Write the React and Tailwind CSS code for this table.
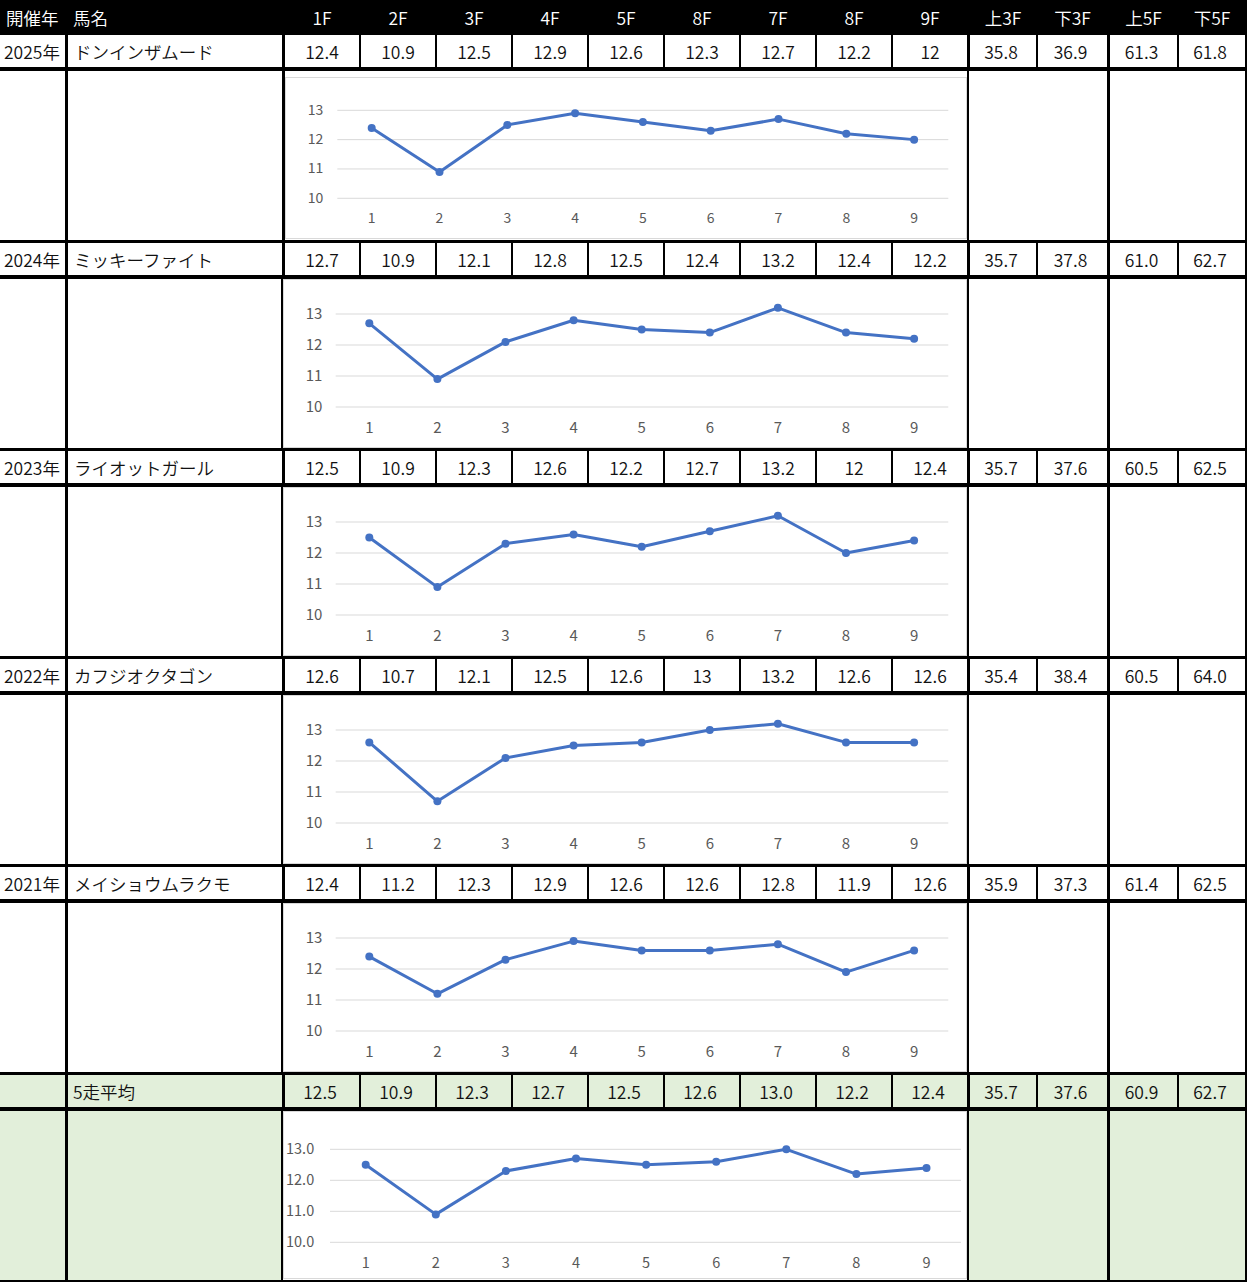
import React from "react";

const HEAD = ["1F", "2F", "3F", "4F", "5F", "8F", "7F", "8F", "9F"];
const TAILHEAD = ["上3F", "下3F", "上5F", "下5F"];

const ROWS = [
  { year: "2025年", name: "ドンインザムード", laps: ["12.4", "10.9", "12.5", "12.9", "12.6", "12.3", "12.7", "12.2", "12"], tail: ["35.8", "36.9", "61.3", "61.8"] },
  { year: "2024年", name: "ミッキーファイト", laps: ["12.7", "10.9", "12.1", "12.8", "12.5", "12.4", "13.2", "12.4", "12.2"], tail: ["35.7", "37.8", "61.0", "62.7"] },
  { year: "2023年", name: "ライオットガール", laps: ["12.5", "10.9", "12.3", "12.6", "12.2", "12.7", "13.2", "12", "12.4"], tail: ["35.7", "37.6", "60.5", "62.5"] },
  { year: "2022年", name: "カフジオクタゴン", laps: ["12.6", "10.7", "12.1", "12.5", "12.6", "13", "13.2", "12.6", "12.6"], tail: ["35.4", "38.4", "60.5", "64.0"] },
  { year: "2021年", name: "メイショウムラクモ", laps: ["12.4", "11.2", "12.3", "12.9", "12.6", "12.6", "12.8", "11.9", "12.6"], tail: ["35.9", "37.3", "61.4", "62.5"] },
];
const AVG = { year: "", name: "5走平均", laps: ["12.5", "10.9", "12.3", "12.7", "12.5", "12.6", "13.0", "12.2", "12.4"], tail: ["35.7", "37.6", "60.9", "62.7"] };

const LAP_W = ["w-[76px]", "w-[76px]", "w-[76px]", "w-[76px]", "w-[76px]", "w-[76px]", "w-[76px]", "w-[76px]", "w-[77px]"];
const LAP_B = ["border-r-2", "border-r-2", "border-r-2", "border-r-2", "border-r-2", "border-r-2", "border-r-2", "border-r-2", "border-r-[3px]"];
const TAIL_W = ["w-[68px] border-r-2", "w-[72px] border-r-[3px]", "w-[69px] border-r-2", "w-[68px] border-r-2"];

const LAYOUTS = {
  first: { w: 682, h: 162, g13: 33.3, unit: 29.33, gx1: 52.3, gx2: 663.3, px0: 86.7, pdx: 67.8, ylx: 30.5, ylAnchor: "middle", xly: 139.7, fs: 14, fmt: (v) => String(v) },
  normal: { w: 684, h: 169, g13: 35, unit: 31, gx1: 52.7, gx2: 665.3, px0: 86.3, pdx: 68.1, ylx: 31, ylAnchor: "middle", xly: 147, fs: 15, fmt: (v) => String(v) },
  avg: { w: 684, h: 168, g13: 38.3, unit: 31, gx1: 47, gx2: 678, px0: 82.7, pdx: 70.1, ylx: 3, ylAnchor: "start", xly: 150.7, fs: 14.5, fmt: (v) => v.toFixed(1) },
};

const FONT = "'Noto Sans CJK JP', 'Noto Sans', sans-serif";

function Chart({ values, kind }) {
  const L = LAYOUTS[kind];
  const yOf = (v) => L.g13 + (13 - v) * L.unit;
  const pts = values.map((v, i) => [L.px0 + i * L.pdx, yOf(parseFloat(v))]);
  return (
    <div className="bg-white border border-[#d9d9d9]" style={{ width: L.w, height: L.h }}>
      <svg width={L.w - 2} height={L.h - 2} viewBox={`1 1 ${L.w - 2} ${L.h - 2}`} className="block">
        {[13, 12, 11, 10].map((t) => (
          <g key={t}>
            <line x1={L.gx1} x2={L.gx2} y1={yOf(t)} y2={yOf(t)} stroke="#d9d9d9" strokeWidth="1" />
            <text
              x={L.ylx}
              y={yOf(t) - 1.5}
              textAnchor={L.ylAnchor}
              dominantBaseline="central"
              fontSize={L.fs}
              fontWeight="400"
              fill="#595959"
              fontFamily={FONT}
            >
              {L.fmt(t)}
            </text>
          </g>
        ))}
        {pts.map(([x], i) => (
          <text
            key={i}
            x={x}
            y={L.xly}
            textAnchor="middle"
            dominantBaseline="central"
            fontSize={L.fs}
            fontWeight="400"
            fill="#595959"
            fontFamily={FONT}
          >
            {i + 1}
          </text>
        ))}
        <polyline
          points={pts.map((p) => p.join(",")).join(" ")}
          fill="none"
          stroke="#4472C4"
          strokeWidth="3"
          strokeLinejoin="round"
          strokeLinecap="round"
        />
        {pts.map(([x, y], i) => (
          <circle key={i} cx={x} cy={y} r="4" fill="#4472C4" />
        ))}
      </svg>
    </div>
  );
}

function DataRow({ row, avg }) {
  const bg = avg ? "bg-[#e2efda]" : "bg-white";
  return (
    <div className="flex h-[36px] border-b-4 border-black">
      <div className={`w-[68px] border-r-[3px] border-black ${bg} flex items-center pl-[4px] pt-[1px] whitespace-nowrap`}>{row.year}</div>
      <div className={`w-[217px] border-r-[3px] border-black ${bg} flex items-center ${avg ? "pl-[5px]" : "pl-[6px]"} pt-[1px] whitespace-nowrap`}>{row.name}</div>
      {row.laps.map((v, i) => (
        <div key={i} className={`${LAP_W[i]} ${LAP_B[i]} border-black ${bg} flex items-center justify-center pt-[1px] ${avg ? "pr-[4px]" : ""}`}>
          {v}
        </div>
      ))}
      {row.tail.map((v, i) => (
        <div key={i} className={`${TAIL_W[i]} border-black ${bg} flex items-center justify-center pt-[1px] pr-[4px]`}>
          {v}
        </div>
      ))}
    </div>
  );
}

function ChartRow({ row, kind, avg }) {
  const bg = avg ? "bg-[#e2efda]" : "bg-white";
  const first = kind === "first";
  return (
    <div className="flex h-[172px] border-b-[3px] border-black">
      <div className={`w-[68px] border-r-[3px] border-black ${bg}`} />
      <div className={`${first ? "w-[217px] border-r-[3px]" : "w-[215px] border-r-2"} border-black ${bg}`} />
      {first ? (
        <div className="w-[682px] pt-[6px] bg-white">
          <Chart values={row.laps} kind="first" />
        </div>
      ) : (
        <Chart values={row.laps} kind={kind} />
      )}
      <div className={`w-[143px] border-l-2 border-r-[3px] border-black ${bg}`} />
      <div className={`w-[137px] border-r-2 border-black ${bg}`} />
    </div>
  );
}

export default function App() {
  return (
    <div className="w-[1247px] h-[1282px] overflow-hidden bg-white text-[#111] text-[17.5px] font-[350] leading-none font-['Noto_Sans_CJK_JP','Noto_Sans',sans-serif]">
      <div className="flex h-[35px] bg-black text-white">
        <div className="w-[68px] flex items-center pl-[6px] whitespace-nowrap">開催年</div>
        <div className="w-[217px] flex items-center pl-[5px] whitespace-nowrap">馬名</div>
        {HEAD.map((h, i) => (
          <div key={i} className={`${LAP_W[i]} ${LAP_B[i]} border-black flex items-center justify-center`}>
            {h}
          </div>
        ))}
        {TAILHEAD.map((h, i) => (
          <div key={i} className={`${TAIL_W[i]} border-black flex items-center justify-center`}>
            {h}
          </div>
        ))}
      </div>
      {ROWS.map((r, i) => (
        <React.Fragment key={i}>
          <DataRow row={r} />
          <ChartRow row={r} kind={i === 0 ? "first" : "normal"} />
        </React.Fragment>
      ))}
      <DataRow row={AVG} avg />
      <ChartRow row={AVG} kind="avg" avg />
    </div>
  );
}
